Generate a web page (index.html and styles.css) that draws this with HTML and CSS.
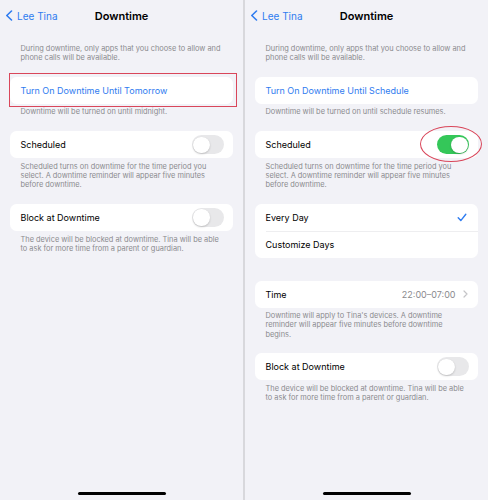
FILE: index.html
```html
<!DOCTYPE html>
<html lang="en">
<head>
<meta charset="utf-8">
<title>Downtime</title>
<link rel="stylesheet" href="styles.css">
</head>
<body>
<div class="device">
  <section class="screen">
    <header class="nav">
      <span class="back">
        <svg class="back-icon" width="8" height="11" viewBox="0 0 8 11"><path d="M6.5 1 L1.8 5.5 L6.5 10" fill="none" stroke="currentColor" stroke-width="1.6" stroke-linecap="round" stroke-linejoin="round"/></svg>
        <span>Lee Tina</span>
      </span>
      <h1 class="title">Downtime</h1>
      <span></span>
    </header>
    <main class="content">
      <p class="note note-intro">During downtime, only apps that you choose to allow and phone calls will be available.</p>
      <div class="group group-marked">
        <div class="row"><span class="link">Turn On Downtime Until Tomorrow</span></div>
      </div>
      <p class="note">Downtime will be turned on until midnight.</p>
      <div class="group">
        <div class="row"><span>Scheduled</span><span class="toggle"></span></div>
      </div>
      <p class="note">Scheduled turns on downtime for the time period you select. A downtime reminder will appear five minutes before downtime.</p>
      <div class="group">
        <div class="row"><span>Block at Downtime</span><span class="toggle"></span></div>
      </div>
      <p class="note">The device will be blocked at downtime. Tina will be able to ask for more time from a parent or guardian.</p>
    </main>
    <div class="home-bar"></div>
  </section>
  <div class="divider"></div>
  <section class="screen">
    <header class="nav">
      <span class="back">
        <svg class="back-icon" width="8" height="11" viewBox="0 0 8 11"><path d="M6.5 1 L1.8 5.5 L6.5 10" fill="none" stroke="currentColor" stroke-width="1.6" stroke-linecap="round" stroke-linejoin="round"/></svg>
        <span>Lee Tina</span>
      </span>
      <h1 class="title">Downtime</h1>
      <span></span>
    </header>
    <main class="content">
      <p class="note note-intro">During downtime, only apps that you choose to allow and phone calls will be available.</p>
      <div class="group">
        <div class="row"><span class="link">Turn On Downtime Until Schedule</span></div>
      </div>
      <p class="note">Downtime will be turned on until schedule resumes.</p>
      <div class="group">
        <div class="row"><span>Scheduled</span><span class="toggle-wrap"><span class="toggle toggle-on"></span><span class="mark-ellipse"></span></span></div>
      </div>
      <p class="note">Scheduled turns on downtime for the time period you select. A downtime reminder will appear five minutes before downtime.</p>
      <div class="group">
        <div class="row"><span>Every Day</span>
          <svg class="check" width="10" height="9" viewBox="0 0 10 9"><path d="M1.2 4.8 L3.8 7.6 L8.8 1.2" fill="none" stroke="currentColor" stroke-width="1.4" stroke-linecap="round" stroke-linejoin="round"/></svg>
        </div>
        <div class="row row-divided"><span>Customize Days</span></div>
      </div>
      <div class="group group-spaced">
        <div class="row"><span>Time</span>
          <span class="value">22:00–07:00
            <svg class="disclosure" width="5" height="8" viewBox="0 0 5 8"><path d="M1 1 L4 4 L1 7" fill="none" stroke="currentColor" stroke-width="1.2" stroke-linecap="round" stroke-linejoin="round"/></svg>
          </span>
        </div>
      </div>
      <p class="note note-time">Downtime will apply to Tina's devices. A downtime reminder will appear five minutes before downtime begins.</p>
      <div class="group">
        <div class="row"><span>Block at Downtime</span><span class="toggle"></span></div>
      </div>
      <p class="note">The device will be blocked at downtime. Tina will be able to ask for more time from a parent or guardian.</p>
    </main>
    <div class="home-bar"></div>
  </section>
</div>
</body>
</html>
```

FILE: styles.css
```css
* { box-sizing: border-box; }

body {
  margin: 0;
  background: #f2f2f7;
  font-family: Inter, "Noto Sans", "Liberation Sans", sans-serif;
  color: #000;
}

.device {
  display: flex;
  width: 488px;
  height: 500px;
  overflow: hidden;
}

.screen {
  width: 243px;
  height: 500px;
  display: flex;
  flex-direction: column;
  background: #f2f2f7;
}

.divider {
  width: 2px;
  flex: none;
  background: #d8d8dc;
}

.nav {
  height: 31px;
  display: grid;
  grid-template-columns: 1fr auto 1fr;
  align-items: center;
}

.back {
  display: flex;
  align-items: center;
  gap: 4px;
  padding-left: 5px;
  color: #2f7cf0;
  font-size: 10px;
}

.back-icon { display: block; }

.title {
  margin: 0;
  font-size: 11px;
  font-weight: 600;
}

.content {
  padding: 0 10px;
}

.note {
  margin: 3.5px 0 0;
  padding: 0 10.5px;
  font-size: 7.4px;
  line-height: 9.3px;
  color: #8a8a8e;
}

.note-intro {
  margin-top: 13px;
  padding-right: 8px;
  line-height: 9.2px;
}

.note-time {
  padding-right: 16px;
}

.group {
  background: #fff;
  border-radius: 6.5px;
  margin-top: 14.5px;
}

.group-spaced { margin-top: 22.5px; }

.group-marked { position: relative; }

.group-marked::after {
  content: "";
  position: absolute;
  top: -4px;
  left: -1.5px;
  right: -3.5px;
  bottom: -3px;
  border: 1px solid #d9465a;
}

.row {
  height: 27px;
  display: flex;
  align-items: center;
  justify-content: space-between;
  padding: 0 9px 0 10.5px;
  font-size: 9px;
}

.row-divided {
  background-image: linear-gradient(#e2e2e6, #e2e2e6);
  background-size: calc(100% - 10.5px) 0.6px;
  background-position: right top;
  background-repeat: no-repeat;
}

.link { color: #2f7cf0; }

.toggle {
  display: block;
  width: 32px;
  height: 19px;
  border-radius: 10px;
  background: #e8e8ea;
  padding: 1.4px;
}

.toggle::before {
  content: "";
  display: block;
  width: 16.2px;
  height: 16.2px;
  border-radius: 50%;
  background: #fff;
  box-shadow: 0 1px 2px rgba(0, 0, 0, 0.18), 0 0 0.5px rgba(0, 0, 0, 0.1);
}

.toggle-on {
  display: flex;
  background: #34c759;
}

.toggle-on::before {
  margin-left: auto;
}

.toggle-wrap {
  position: relative;
  display: block;
}

.mark-ellipse {
  position: absolute;
  left: -17.5px;
  top: -9px;
  width: 62px;
  height: 36px;
  border: 1px solid #d9465a;
  border-radius: 50%;
}

.check {
  color: #2f7cf0;
  margin-right: 2px;
  display: block;
}

.value {
  display: flex;
  align-items: center;
  gap: 7px;
  color: #8a8a8e;
  padding-right: 1.5px;
}

.disclosure {
  color: #c4c4c7;
  display: block;
}

.home-bar {
  margin: auto auto 5px;
  width: 88px;
  height: 3px;
  border-radius: 2px;
  background: #000;
}
```
